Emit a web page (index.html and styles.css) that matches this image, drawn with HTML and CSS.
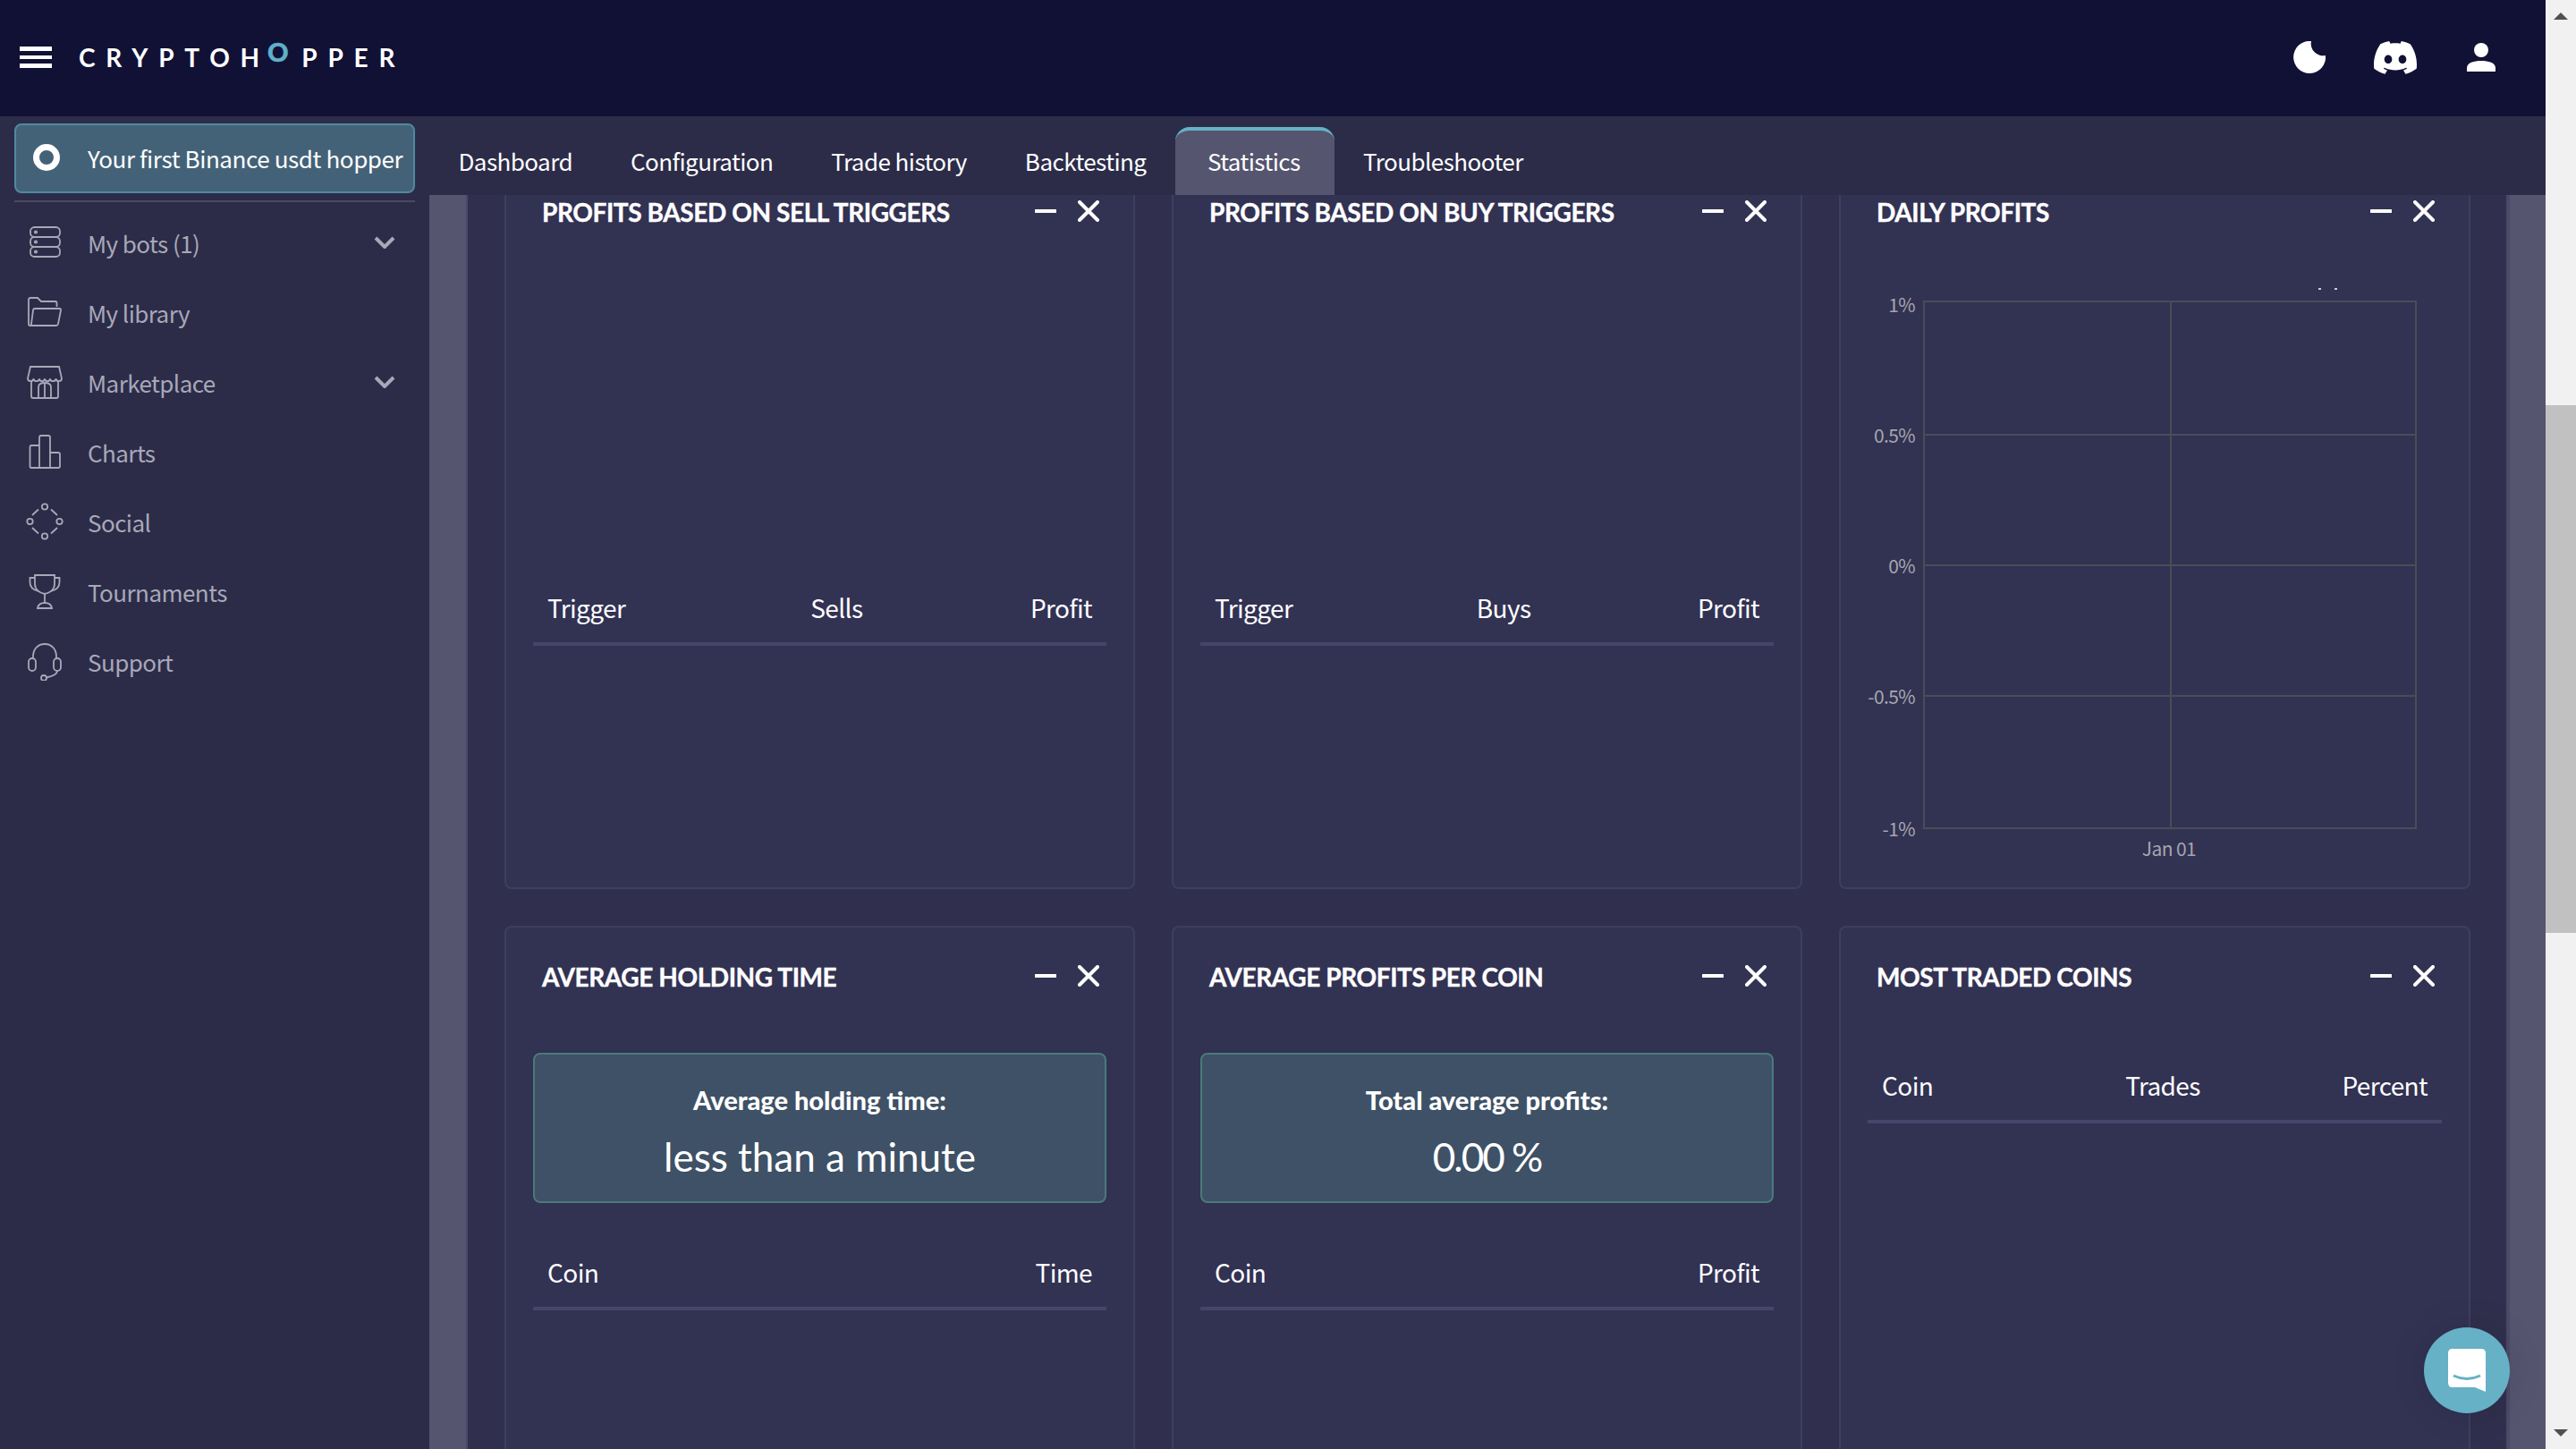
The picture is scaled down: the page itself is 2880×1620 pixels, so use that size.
FILE: index.html
```html
<!DOCTYPE html>
<html lang="en">
<head>
  <meta charset="UTF-8">
  <title>Cryptohopper Statistics</title>
  <link rel="stylesheet" href="styles.css">
</head>
<body>
  <div class="page">
    <div class="app">
      <header class="topbar">
        <div class="brand">
          <div class="burger"><span></span><span></span><span></span></div>
          <div class="logo">CRYPTOH<span class="logo-o">O</span>PPER</div>
        </div>
        <div class="top-icons">
          <svg class="icon-moon" viewBox="0 0 36 36"><path fill="#fff" d="M20 0A18 18 0 1 0 36 16A13.5 13.5 0 0 1 20 0Z"/></svg>
          <svg class="icon-discord" viewBox="0 0 24 18.4"><path fill="#fff" transform="translate(0 -2.85)" d="M20.317 4.3698a19.7913 19.7913 0 00-4.8851-1.5152.0741.0741 0 00-.0785.0371c-.211.3753-.4447.8648-.6083 1.2495-1.8447-.2762-3.68-.2762-5.4868 0-.1636-.3933-.4058-.8742-.6177-1.2495a.077.077 0 00-.0785-.037 19.7363 19.7363 0 00-4.8852 1.515.0699.0699 0 00-.0321.0277C.5334 9.0458-.319 13.5799.0992 18.0578a.0824.0824 0 00.0312.0561c2.0528 1.5076 4.0413 2.4228 5.9929 3.0294a.0777.0777 0 00.0842-.0276c.4616-.6304.8731-1.2952 1.226-1.9942a.076.076 0 00-.0416-.1057c-.6528-.2476-1.2743-.5495-1.8722-.8923a.077.077 0 01-.0076-.1277c.1258-.0943.2517-.1923.3718-.2914a.0743.0743 0 01.0776-.0105c3.9278 1.7933 8.18 1.7933 12.0614 0a.0739.0739 0 01.0785.0095c.1202.099.246.1981.3728.2924a.077.077 0 01-.0066.1276 12.2986 12.2986 0 01-1.873.8914.0766.0766 0 00-.0407.1067c.3604.698.7719 1.3628 1.225 1.9932a.076.076 0 00.0842.0286c1.961-.6067 3.9495-1.5219 6.0023-3.0294a.077.077 0 00.0313-.0552c.5004-5.177-.8382-9.6739-3.5485-13.6604a.061.061 0 00-.0312-.0286zM8.02 15.3312c-1.1825 0-2.1569-1.0857-2.1569-2.419 0-1.3332.9555-2.4189 2.157-2.4189 1.2108 0 2.1757 1.0952 2.1568 2.419 0 1.3332-.9555 2.4189-2.1569 2.4189zm7.9748 0c-1.1825 0-2.1569-1.0857-2.1569-2.419 0-1.3332.9554-2.4189 2.1569-2.4189 1.2108 0 2.1757 1.0952 2.1568 2.419 0 1.3332-.946 2.4189-2.1568 2.4189Z"/></svg>
          <svg class="icon-user" viewBox="0 0 32 32"><circle fill="#fff" cx="16" cy="8" r="8"/><path fill="#fff" d="M0 32V28C0 22 8 20 16 20S32 22 32 28V32Z"/></svg>
        </div>
      </header>

      <div class="below">
        <aside class="sidebar">
          <div class="hopper">
            <span class="hopper-ring"></span>
            <span class="hopper-name">Your first Binance usdt hopper</span>
          </div>
          <div class="side-rule"></div>
          <nav class="menu">
            <div class="menu-item">
              <svg class="menu-icon" viewBox="0 0 44 44"><rect x="6" y="5" width="33" height="11" rx="4.5"/><rect x="6" y="16" width="33" height="11" rx="4.5"/><rect x="6" y="27" width="33" height="11" rx="4.5"/><circle cx="12" cy="10.5" r="1.2"/><circle cx="12" cy="21.5" r="1.2"/><circle cx="12" cy="32.5" r="1.2"/></svg>
              <span class="menu-label">My bots (1)</span>
              <svg class="chev" viewBox="0 0 24 14"><path d="M2 2L12 12L22 2"/></svg>
            </div>
            <div class="menu-item">
              <svg class="menu-icon" viewBox="0 0 44 44"><path d="M8 37H5.5Q4 37 4 35V9Q4 6 6 6H14L18 10H34Q35.5 10 35.5 12V16"/><path d="M11 18H38.5Q40.5 18 40 20L37 35Q36.5 37 35 37H8Q6.5 37 7 35L9 20Q9.3 18 11 18Z"/></svg>
              <span class="menu-label">My library</span>
            </div>
            <div class="menu-item">
              <svg class="menu-icon" viewBox="0 0 44 44"><path d="M6 5H38L41 18C41 22 35 22 34.5 18.5C34 22 28.5 22 28 18.5C27.5 22 22.5 22 22 18.5C21.5 22 16.5 22 16 18.5C15.5 22 10 22 9.5 18.5C9 22 3 22 3 18Z"/><path d="M7 22V38Q7 40 9 40H35Q37 40 37 38V22"/><path d="M15 40V28Q15 23 22 23Q29 23 29 28V40"/><path d="M22 23V40"/></svg>
              <span class="menu-label">Marketplace</span>
              <svg class="chev" viewBox="0 0 24 14"><path d="M2 2L12 12L22 2"/></svg>
            </div>
            <div class="menu-item">
              <svg class="menu-icon" viewBox="0 0 44 44"><path d="M16 40V6Q16 4 18 4H26Q28 4 28 6V40"/><path d="M16 15H7Q5.5 15 5.5 17V38Q5.5 40 7 40H37Q39 40 39 38V25Q39 23 37 23H28"/></svg>
              <span class="menu-label">Charts</span>
            </div>
            <div class="menu-item">
              <svg class="menu-icon" viewBox="0 0 44 44"><circle cx="22" cy="5.5" r="3.2"/><circle cx="22" cy="38.5" r="3.2"/><circle cx="5.5" cy="22" r="3.2"/><circle cx="38.5" cy="22" r="3.2"/><path d="M15 8.5L8 15M29 8.5L36 15M8 29L15 35.5M36 29L29 35.5"/></svg>
              <span class="menu-label">Social</span>
            </div>
            <div class="menu-item">
              <svg class="menu-icon" viewBox="0 0 44 44"><path d="M11 4H33V14C33 20 28 24 22 25C16 24 11 20 11 14Z"/><path d="M11 7H5.5V12C5.5 18 11 21 15 22M33 7H38.5V12C38.5 18 33 21 29 22"/><path d="M22 25V35"/><path d="M14 41Q15 35 22 35Q29 35 30 41Z"/></svg>
              <span class="menu-label">Tournaments</span>
            </div>
            <div class="menu-item">
              <svg class="menu-icon" viewBox="0 0 44 44"><path d="M9 20V17C9 8 15 3 22 3C29 3 35 8 35 17V20"/><rect x="4" y="19" width="8" height="14" rx="4"/><rect x="32" y="19" width="8" height="14" rx="4"/><path d="M36 33C36 37 31 39 24 40.5"/><circle cx="21" cy="41" r="3"/></svg>
              <span class="menu-label">Support</span>
            </div>
          </nav>
        </aside>

        <div class="workspace">
          <nav class="tabs">
            <div class="tab">Dashboard</div>
            <div class="tab">Configuration</div>
            <div class="tab">Trade history</div>
            <div class="tab">Backtesting</div>
            <div class="tab active">Statistics</div>
            <div class="tab">Troubleshooter</div>
          </nav>

          <main class="content">
            <div class="content-inner">
              <div class="cards">

                <section class="card">
                  <div class="card-head">
                    <h2>Profits based on sell triggers</h2>
                    <div class="card-tools">
                      <svg viewBox="0 0 24 24"><path d="M1 12H23"/></svg>
                      <svg viewBox="0 0 24 24"><path d="M2 2L22 22M22 2L2 22"/></svg>
                    </div>
                  </div>
                  <div class="card-body">
                    <div class="spacer"></div>
                    <table class="data">
                      <tr><th>Trigger</th><th class="mid">Sells</th><th class="end">Profit</th></tr>
                    </table>
                  </div>
                </section>

                <section class="card">
                  <div class="card-head">
                    <h2>Profits based on buy triggers</h2>
                    <div class="card-tools">
                      <svg viewBox="0 0 24 24"><path d="M1 12H23"/></svg>
                      <svg viewBox="0 0 24 24"><path d="M2 2L22 22M22 2L2 22"/></svg>
                    </div>
                  </div>
                  <div class="card-body">
                    <div class="spacer"></div>
                    <table class="data">
                      <tr><th>Trigger</th><th class="mid">Buys</th><th class="end">Profit</th></tr>
                    </table>
                  </div>
                </section>

                <section class="card">
                  <div class="card-head">
                    <h2>Daily profits</h2>
                    <div class="card-tools">
                      <svg viewBox="0 0 24 24"><path d="M1 12H23"/></svg>
                      <svg viewBox="0 0 24 24"><path d="M2 2L22 22M22 2L2 22"/></svg>
                    </div>
                  </div>
                  <div class="card-body">
                    <svg class="chart" viewBox="0 0 640 650">
                      <path class="mark" d="M502 4H505M520 4H523"/>
                      <path class="grid-line" d="M61 18H611V607H61ZM61 167H611M61 313H611M61 459H611M337 18V607"/>
                      <text x="51" y="30">1%</text>
                      <text x="51" y="176">0.5%</text>
                      <text x="51" y="322">0%</text>
                      <text x="51" y="468">-0.5%</text>
                      <text x="51" y="616">-1%</text>
                      <text class="tick" x="335" y="638">Jan 01</text>
                    </svg>
                  </div>
                </section>

                <section class="card">
                  <div class="card-head">
                    <h2>Average holding time</h2>
                    <div class="card-tools">
                      <svg viewBox="0 0 24 24"><path d="M1 12H23"/></svg>
                      <svg viewBox="0 0 24 24"><path d="M2 2L22 22M22 2L2 22"/></svg>
                    </div>
                  </div>
                  <div class="card-body">
                    <div class="stat">
                      <div class="stat-label">Average holding time:</div>
                      <div class="stat-value">less than a minute</div>
                    </div>
                    <table class="data">
                      <tr><th>Coin</th><th class="end">Time</th></tr>
                    </table>
                  </div>
                </section>

                <section class="card">
                  <div class="card-head">
                    <h2>Average profits per coin</h2>
                    <div class="card-tools">
                      <svg viewBox="0 0 24 24"><path d="M1 12H23"/></svg>
                      <svg viewBox="0 0 24 24"><path d="M2 2L22 22M22 2L2 22"/></svg>
                    </div>
                  </div>
                  <div class="card-body">
                    <div class="stat">
                      <div class="stat-label">Total average profits:</div>
                      <div class="stat-value num">0.00 %</div>
                    </div>
                    <table class="data">
                      <tr><th>Coin</th><th class="end">Profit</th></tr>
                    </table>
                  </div>
                </section>

                <section class="card">
                  <div class="card-head">
                    <h2>Most traded coins</h2>
                    <div class="card-tools">
                      <svg viewBox="0 0 24 24"><path d="M1 12H23"/></svg>
                      <svg viewBox="0 0 24 24"><path d="M2 2L22 22M22 2L2 22"/></svg>
                    </div>
                  </div>
                  <div class="card-body">
                    <table class="data coins">
                      <tr><th>Coin</th><th class="mid">Trades</th><th class="end">Percent</th></tr>
                    </table>
                  </div>
                </section>

              </div>
            </div>
          </main>
        </div>
      </div>
    </div>

    <div class="scrollbar">
      <div class="arrow-up"></div>
      <div class="thumb"></div>
      <div class="arrow-down"></div>
    </div>
  </div>

  <div class="chat-btn">
    <svg viewBox="0 0 42 48"><path fill="#fff" d="M5 0H37Q42 0 42 5V48L30 43H5Q0 43 0 38V5Q0 0 5 0Z"/><path fill="none" stroke="#66b1c6" stroke-width="3" d="M6 30Q21 37 36 30"/></svg>
  </div>
</body>
</html>
```

FILE: styles.css
```css
* {
  box-sizing: border-box;
}
html, body {
  margin: 0;
  padding: 0;
  height: 100%;
  overflow: hidden;
}
body {
  background: #2c2c49;
  color: #fff;
  font-family: "Noto Sans CJK JP", "Noto Sans", sans-serif;
}
.page {
  display: flex;
  width: 2880px;
  height: 1620px;
}
.app {
  flex: 1;
  min-width: 0;
  display: flex;
  flex-direction: column;
}

/* top bar */
.topbar {
  height: 130px;
  flex: none;
  background: #111136;
  display: flex;
  align-items: center;
  justify-content: space-between;
}
.brand {
  display: flex;
  align-items: center;
  padding: 0 0 2px 22px;
  gap: 30px;
}
.burger {
  width: 36px;
  display: flex;
  flex-direction: column;
  gap: 5px;
}
.burger span {
  display: block;
  height: 4.67px;
  background: #fff;
}
.logo {
  font-family: "Lato", sans-serif;
  font-size: 28px;
  font-weight: 700;
  letter-spacing: 11.8px;
  line-height: 1;
  white-space: nowrap;
}
.logo-o {
  margin: 0 3px 0 -3px;
  color: #5fb0c8;
  font-size: 29px;
  font-weight: 900;
  line-height: 0;
  vertical-align: 6px;
  -webkit-text-stroke: 0.5px #5fb0c8;
}
.top-icons {
  display: flex;
  align-items: center;
  padding: 0 56px 2px 0;
}
.icon-moon {
  width: 36px;
  height: 36px;
  margin-right: 54px;
}
.icon-discord {
  width: 48px;
  height: 37px;
  margin-right: 56px;
}
.icon-user {
  width: 32px;
  height: 32px;
}

/* sidebar */
.below {
  flex: 1;
  min-height: 0;
  display: flex;
}
.sidebar {
  width: 480px;
  flex: none;
  background: #2c2c49;
  padding: 8px 16px 0;
}
.hopper {
  height: 78px;
  display: flex;
  align-items: center;
  gap: 31px;
  padding: 0 0 2px 19px;
  background: #436278;
  border: 2px solid #4f8a9f;
  border-radius: 8px;
  font-size: 26px;
  white-space: nowrap;
}
.hopper-name {
  letter-spacing: -0.4px;
}
.hopper-ring {
  width: 30px;
  height: 30px;
  border: 7px solid #fff;
  border-radius: 50%;
  flex: none;
}
.side-rule {
  height: 2px;
  margin: 8px 0 7px;
  background: #4a4a64;
}
.menu-item {
  height: 78px;
  display: flex;
  align-items: center;
  margin-left: -4px;
  padding: 0 0 2px 16px;
  color: #a8a8b8;
  font-size: 26px;
  letter-spacing: -0.55px;
}
.menu-icon {
  width: 44px;
  height: 44px;
  flex: none;
  fill: none;
  stroke: #a8a8b8;
  stroke-width: 1.8;
  margin-right: 26px;
}
.menu-label {
  flex: 1;
}
.chev {
  width: 24px;
  height: 14px;
  margin-right: 22px;
  fill: none;
  stroke: #a8a8b8;
  stroke-width: 4;
}

/* tabs */
.workspace {
  flex: 1;
  min-width: 0;
  display: flex;
  flex-direction: column;
}
.tabs {
  height: 88px;
  flex: none;
  display: flex;
  align-items: flex-end;
  background: #2c2c49;
  font-size: 26px;
  letter-spacing: -0.55px;
}
.tab {
  height: 72px;
  display: flex;
  align-items: center;
  padding: 0 32.5px 6px;
  white-space: nowrap;
}
.tab.active {
  height: 76px;
  padding: 0 38px 6px 36px;
  background: #555570;
  border-top: 4px solid #66b1c6;
  border-radius: 16px 16px 0 0;
}

/* scrolled content */
.content {
  flex: 1;
  min-height: 0;
  overflow: hidden;
  background: #555570;
  padding: 0 40px 0 41px;
}
.content-inner {
  height: 100%;
  overflow: hidden;
  background: #30304e;
  border-left: 2px solid #4a4a68;
  border-right: 4px solid #4a4a68;
  padding: 0 40px 0 41px;
}
.cards {
  margin-top: -38px;
  display: grid;
  grid-template-columns: repeat(3, 1fr);
  grid-auto-rows: 814px;
  gap: 41px;
}
.card {
  background: #323253;
  border: 2px solid #3e3e5e;
  border-radius: 8px;
}
.card-head {
  height: 137px;
  display: flex;
  justify-content: space-between;
  padding: 37px 38px 0 40px;
}
.card-head h2 {
  margin: 0;
  font-family: "Lato", sans-serif;
  font-size: 28px;
  font-weight: 700;
  letter-spacing: -0.4px;
  line-height: 36px;
  text-transform: uppercase;
  white-space: nowrap;
  -webkit-text-stroke: 0.4px #fff;
}
.card-tools {
  display: flex;
  gap: 24px;
  padding-top: 5px;
}
.card-tools svg {
  width: 24px;
  height: 24px;
  fill: none;
  stroke: #fff;
  stroke-width: 4;
  stroke-linecap: round;
}
.card-body {
  padding: 0 30px;
}
.spacer {
  height: 321px;
}
table.data {
  width: 100%;
  border-collapse: collapse;
  border-bottom: 4px solid #46466a;
}
.data th {
  height: 80px;
  padding: 0 16px;
  font-size: 28px;
  font-weight: 400;
  letter-spacing: -0.6px;
  text-align: left;
  white-space: nowrap;
}
.data th.mid {
  text-align: center;
}
.data th.end {
  text-align: right;
}
.coins th:first-child {
  width: 270px;
}
.coins th.mid {
  width: 120px;
}

/* stat box */
.stat {
  height: 168px;
  margin: 3px 0 38px;
  padding-top: 8px;
  display: flex;
  flex-direction: column;
  align-items: center;
  justify-content: center;
  gap: 20px;
  background: #3e5166;
  border: 2px solid #4a7a7a;
  border-radius: 8px;
  font-family: "Lato", sans-serif;
}
.stat-label {
  font-size: 29px;
  font-weight: 900;
  line-height: 36px;
}
.stat-value {
  font-size: 44px;
  line-height: 50px;
}
.stat-value.num {
  letter-spacing: -2px;
}

/* chart */
.chart {
  display: block;
  width: 640px;
  height: 650px;
  margin-left: 2px;
  overflow: visible;
}
.chart text {
  fill: #a6a6ae;
  font-size: 21px;
  letter-spacing: -0.6px;
  text-anchor: end;
}
.chart text.tick {
  text-anchor: middle;
}
.grid-line {
  fill: none;
  stroke: #4a4d58;
  stroke-width: 2;
}
.mark {
  stroke: #fff;
  stroke-width: 1.5;
}

/* browser scrollbar */
.scrollbar {
  width: 34px;
  flex: none;
  display: flex;
  flex-direction: column;
  align-items: center;
  background: #f1f1f1;
  padding-top: 14px;
}
.arrow-up {
  width: 0;
  height: 0;
  border-left: 8px solid transparent;
  border-right: 8px solid transparent;
  border-bottom: 8px solid #505050;
}
.thumb {
  width: 100%;
  height: 590px;
  margin-top: 431px;
  background: #c1c1c1;
}
.arrow-down {
  width: 0;
  height: 0;
  margin-top: 555px;
  border-left: 8px solid transparent;
  border-right: 8px solid transparent;
  border-top: 8px solid #505050;
}

/* chat launcher over the page */
.chat-btn {
  position: fixed;
  left: 2710px;
  top: 1484px;
  width: 96px;
  height: 96px;
  border-radius: 50%;
  background: #66b1c6;
  box-shadow: 0 0 40px rgba(0, 0, 0, 0.12);
  display: flex;
  align-items: center;
  justify-content: center;
}
.chat-btn svg {
  width: 42px;
  height: 48px;
}
```
